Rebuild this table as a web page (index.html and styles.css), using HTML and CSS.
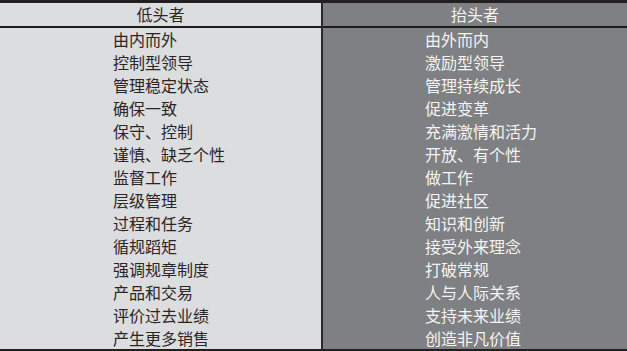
FILE: index.html
```html
<!DOCTYPE html>
<html lang="zh">
<head>
<meta charset="utf-8">
<title>低头者与抬头者</title>
<link rel="stylesheet" href="styles.css">
</head>
<body>
<div class="band"></div>
<div class="table">
  <div class="col col-left">
    <div class="head">低头者</div>
    <ul class="rows">
      <li>由内而外</li>
      <li>控制型领导</li>
      <li>管理稳定状态</li>
      <li>确保一致</li>
      <li>保守、控制</li>
      <li>谨慎、缺乏个性</li>
      <li>监督工作</li>
      <li>层级管理</li>
      <li>过程和任务</li>
      <li>循规蹈矩</li>
      <li>强调规章制度</li>
      <li>产品和交易</li>
      <li>评价过去业绩</li>
      <li>产生更多销售</li>
    </ul>
  </div>
  <div class="col col-right">
    <div class="head">抬头者</div>
    <ul class="rows">
      <li>由外而内</li>
      <li>激励型领导</li>
      <li>管理持续成长</li>
      <li>促进变革</li>
      <li>充满激情和活力</li>
      <li>开放、有个性</li>
      <li>做工作</li>
      <li>促进社区</li>
      <li>知识和创新</li>
      <li>接受外来理念</li>
      <li>打破常规</li>
      <li>人与人际关系</li>
      <li>支持未来业绩</li>
      <li>创造非凡价值</li>
    </ul>
  </div>
</div>
<div class="band band-bottom"></div>
</body>
</html>
```
FILE: styles.css
```css
html, body {
  margin: 0;
  padding: 0;
  background: #231f20;
}
body {
  width: 627px;
  height: 351px;
  overflow: hidden;
  font-family: "Noto Sans CJK SC", "Noto Sans", sans-serif;
  font-size: 16px;
}
.band {
  height: 3px;
  background: #231f20;
}
.band-bottom {
  height: 2px;
}
.table {
  display: flex;
  height: 346px;
}
.col {
  display: flex;
  flex-direction: column;
}
.col-left {
  width: 321px;
  background: #dcdddf;
  color: #2a2627;
  border-right: 2px solid #2b2829;
}
.col-right {
  flex: 1;
  background: #7f8083;
  color: #f4f4f4;
}
.head {
  height: 23px;
  line-height: 23px;
  text-align: center;
  border-bottom: 2px solid #1e1b1c;
}
.rows {
  list-style: none;
  margin: 0;
  padding: 0;
  flex: 1;
  display: grid;
  grid-template-rows: repeat(14, 1fr);
}
.rows li {
  display: flex;
  align-items: center;
  line-height: 1;
}
.col-left .rows li {
  padding-left: 113px;
}
.col-right .rows li {
  padding-left: 102px;
}
```
